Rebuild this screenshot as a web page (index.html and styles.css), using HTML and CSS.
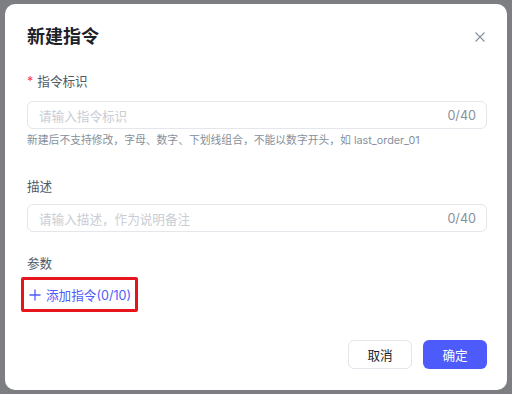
FILE: index.html
```html
<!DOCTYPE html>
<html lang="zh-CN">
<head>
    <meta charset="UTF-8">
    <meta name="viewport" content="width=device-width, initial-scale=1.0">
    <title>新建指令</title>
    <link rel="stylesheet" href="styles.css">
</head>
<body>
    <!-- dialog -->
    <div class="dialog">
        <div class="dialog-header">
            <h2 class="dialog-title">新建指令</h2>
            <span class="close">
                <svg width="10" height="10" viewBox="0 0 10 10">
                    <path d="M0.5 0.5 L9.5 9.5 M9.5 0.5 L0.5 9.5" stroke="#86909c" stroke-width="1.1" fill="none"/>
                </svg>
            </span>
        </div>

        <div class="field field-first">
            <label class="label"><span class="required">*</span>指令标识</label>
            <div class="input">
                <span class="placeholder">请输入指令标识</span>
                <span class="count">0/40</span>
            </div>
            <p class="hint">新建后不支持修改，字母、数字、下划线组合，不能以数字开头，如 last_order_01</p>
        </div>

        <div class="field field-desc">
            <label class="label">描述</label>
            <div class="input">
                <span class="placeholder">请输入描述，作为说明备注</span>
                <span class="count">0/40</span>
            </div>
        </div>

        <div class="field field-params">
            <label class="label">参数</label>
            <div class="add-wrap">
                <button class="add-btn">
                    <svg width="12" height="12" viewBox="0 0 12 12">
                        <path d="M6 0.5 V11.5 M0.5 6 H11.5" stroke="#4e5bfb" stroke-width="1.3" fill="none"/>
                    </svg>
                    添加指令(0/10)
                </button>
            </div>
        </div>

        <div class="dialog-footer">
            <button class="button button-default">取消</button>
            <button class="button button-primary">确定</button>
        </div>
    </div>
</body>
</html>
```

FILE: styles.css
```css
body {
    margin: 0;
    padding: 4px 5px;
    background-color: #7d7e82;
    font-family: 'Inter', 'Noto Sans CJK SC', sans-serif;
    box-sizing: border-box;
    height: 394px;
    overflow: hidden;
}

.dialog {
    width: 502px;
    height: 386px;
    background-color: white;
    border-radius: 10px;
    padding: 21px 20px 0 22px;
    box-sizing: border-box;
    display: flex;
    flex-direction: column;
}

.dialog-header {
    display: flex;
    justify-content: space-between;
    align-items: center;
    height: 24px;
}

.dialog-title {
    margin: 0;
    font-size: 18px;
    line-height: 24px;
    font-weight: 600;
    color: #1d2129;
}

.close {
    display: flex;
    width: 10px;
    height: 10px;
    margin-right: 2px;
}

.field {
    display: flex;
    flex-direction: column;
}

.field-first {
    margin-top: 23px;
}

.field-desc {
    margin-top: 28px;
}

.field-params {
    margin-top: 22px;
}

.label {
    font-size: 12.6px;
    line-height: 20px;
    color: #4e5969;
}

.required {
    color: #f53f3f;
    margin-right: 4px;
}

.input {
    height: 28px;
    box-sizing: border-box;
    border: 1px solid #e5e6eb;
    border-radius: 6px;
    padding: 0 10px 0 11px;
    display: flex;
    align-items: center;
    justify-content: space-between;
    font-size: 12.6px;
}

.field-first .input {
    margin-top: 9px;
}

.field-desc .input {
    margin-top: 7px;
}

.placeholder {
    color: #c9cdd4;
}

.count {
    color: #86909c;
}

.hint {
    margin: 4px 0 0 0;
    font-size: 10.8px;
    line-height: 16px;
    color: #86909c;
}

.add-wrap {
    margin: 3px 0 0 -6px;
    width: 117px;
    height: 35px;
    border: 3px solid #e8141d;
    border-radius: 2px;
    box-sizing: border-box;
    display: flex;
    align-items: center;
}

.add-btn {
    border: none;
    background: none;
    padding: 0 0 0 5px;
    display: flex;
    align-items: center;
    gap: 5px;
    font-family: 'Inter', 'Noto Sans CJK SC', sans-serif;
    font-size: 12.6px;
    color: #4e5bfb;
    cursor: pointer;
    white-space: nowrap;
}

.dialog-footer {
    margin-top: 28px;
    display: flex;
    justify-content: flex-end;
    gap: 11px;
}

.button {
    width: 64px;
    height: 29px;
    box-sizing: border-box;
    border-radius: 6px;
    font-family: 'Inter', 'Noto Sans CJK SC', sans-serif;
    font-size: 12.6px;
    cursor: pointer;
}

.button-default {
    background-color: white;
    border: 1px solid #e5e6eb;
    color: #1d2129;
}

.button-primary {
    background-color: #4e5bfb;
    border: none;
    color: white;
}
```
